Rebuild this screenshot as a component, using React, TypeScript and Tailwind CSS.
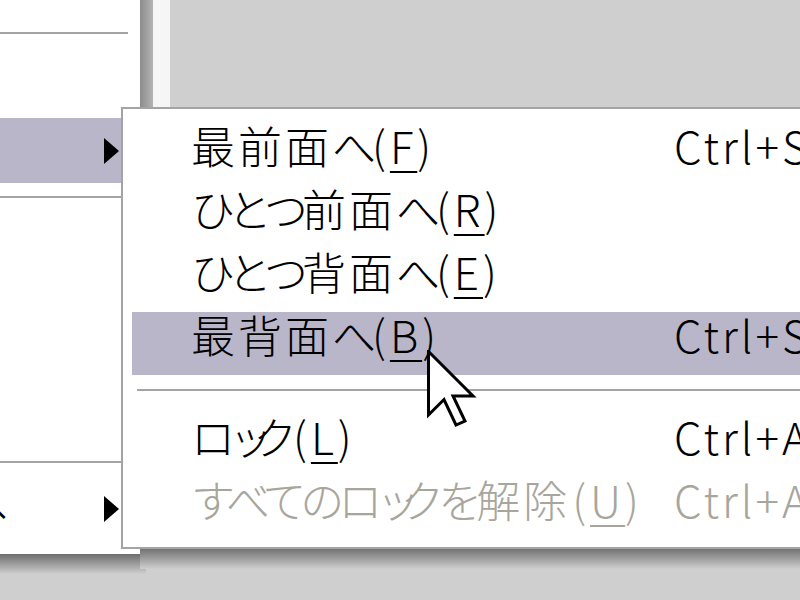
import React from 'react';

type Item = {
  label: string;
  key: string;
  shortcut?: string;
  active?: boolean;
  disabled?: boolean;
};

const topItems: Item[] = [
  { label: '最前面へ', key: 'F', shortcut: 'Ctrl+Shift+]' },
  { label: 'ひとつ前面へ', key: 'R' },
  { label: 'ひとつ背面へ', key: 'E' },
  { label: '最背面へ', key: 'B', shortcut: 'Ctrl+Shift+[', active: true },
];

const lockItems: Item[] = [
  { label: 'ロック', key: 'L', shortcut: 'Ctrl+Alt+L' },
  { label: 'すべてのロックを解除', key: 'U', shortcut: 'Ctrl+Alt+Shift+L', disabled: true },
];

// the old UI font had proportional kana, so squeeze kana and small kana
const charClass = (ch: string) => {
  if ('ッャュョァィゥェォっゃゅょ'.includes(ch)) return 'tracking-[-20px]';
  if (/[\u3040-\u30ff]/.test(ch)) return 'tracking-[-6px]';
  return 'tracking-[3px]';
};

const Label = ({ text }: { text: string }) => (
  <>
    {text.split('').map((ch, i) => (
      <span key={i} className={charClass(ch)}>
        {ch}
      </span>
    ))}
  </>
);

const Arrow = () => (
  <svg width="17" height="28" viewBox="0 0 17 28" className="shrink-0">
    <polygon points="1,1 16,14 1,27" fill="#000" />
  </svg>
);

const MenuRow = ({ item }: { item: Item }) => (
  <div
    className={`ml-[9px] flex h-[63px] items-center pb-[19px] pl-[59px] ${
      item.active ? 'bg-[#bab6c9]' : ''
    } ${item.disabled ? 'text-[#a8a69c]' : 'text-black'}`}
  >
    <span className="w-[483px] shrink-0 whitespace-nowrap tracking-[4px]">
      <Label text={item.label} />
      <span className="pl-[2px]">(</span>
      <span className="underline decoration-2 underline-offset-[7px]">{item.key}</span>)
    </span>
    {item.shortcut && <span className="whitespace-nowrap tracking-[3px]">{item.shortcut}</span>}
  </div>
);

const Cursor = () => (
  <svg
    width="50"
    height="80"
    viewBox="0 0 50 80"
    className="absolute left-[427px] top-[350px]"
  >
    <polygon
      points="1.5,1.5 1.5,65 17,49.5 29,75 38,71 26,46 46,46"
      fill="#fff"
      stroke="#000"
      strokeWidth="3"
      strokeLinejoin="miter"
    />
  </svg>
);

export default function App() {
  return (
    <div className="relative h-[600px] w-[800px] overflow-hidden bg-[#cfcfcf] font-['Noto_Sans_CJK_JP','Noto_Sans',sans-serif] text-[44px] font-light tracking-[4px]">
      {/* parent menu edge + shadows */}
      <div className="absolute left-[140px] top-0 h-[556px] w-[13px] bg-gradient-to-r from-[#8c8c8c] to-[#b4b4b4]" />
      <div className="absolute left-[153px] top-0 h-[556px] w-[17px] bg-[#f6f6f6]" />
      <div className="absolute left-0 top-[554px] h-[20px] w-[146px] bg-gradient-to-b from-[#6e6e6e] to-[#cfcfcf]" />
      <div className="absolute left-[140px] top-[549px] h-[20px] w-[660px] bg-gradient-to-b from-[#747474] to-[#cfcfcf]" />

      {/* parent menu */}
      <div className="absolute left-0 top-0 flex h-[554px] w-[140px] flex-col overflow-hidden bg-white">
        <div className="h-[32px]" />
        <div className="h-[2px] w-[128px] bg-[#a4a4a4]" />
        <div className="h-[84px]" />
        <div className="flex h-[65px] items-center justify-end bg-[#bab6c9] pr-[20px]">
          <Arrow />
        </div>
        <div className="h-[13px]" />
        <div className="h-[2px] w-[124px] bg-[#a4a4a4]" />
        <div className="h-[263px]" />
        <div className="h-[2px] w-[124px] bg-[#a4a4a4]" />
        <div className="h-[14px]" />
        <div className="flex h-[64px] items-center justify-between pr-[20px]">
          <span className="-ml-[36px] pb-[14px] text-black">へ</span>
          <Arrow />
        </div>
      </div>

      {/* submenu */}
      <div className="absolute left-[121px] top-[107px] flex h-[442px] w-[720px] flex-col border-2 border-[#a4a4a4] bg-white pb-[7px] pt-[14px]">
        {topItems.map(item => (
          <MenuRow key={item.key} item={item} />
        ))}
        <div className="flex h-[39px] flex-col pt-[14px]">
          <div className="ml-[14px] h-[2px] bg-[#a4a4a4]" />
          <div className="ml-[14px] h-[1px] bg-white" />
        </div>
        {lockItems.map(item => (
          <MenuRow key={item.key} item={item} />
        ))}
      </div>

      <Cursor />
    </div>
  );
}
